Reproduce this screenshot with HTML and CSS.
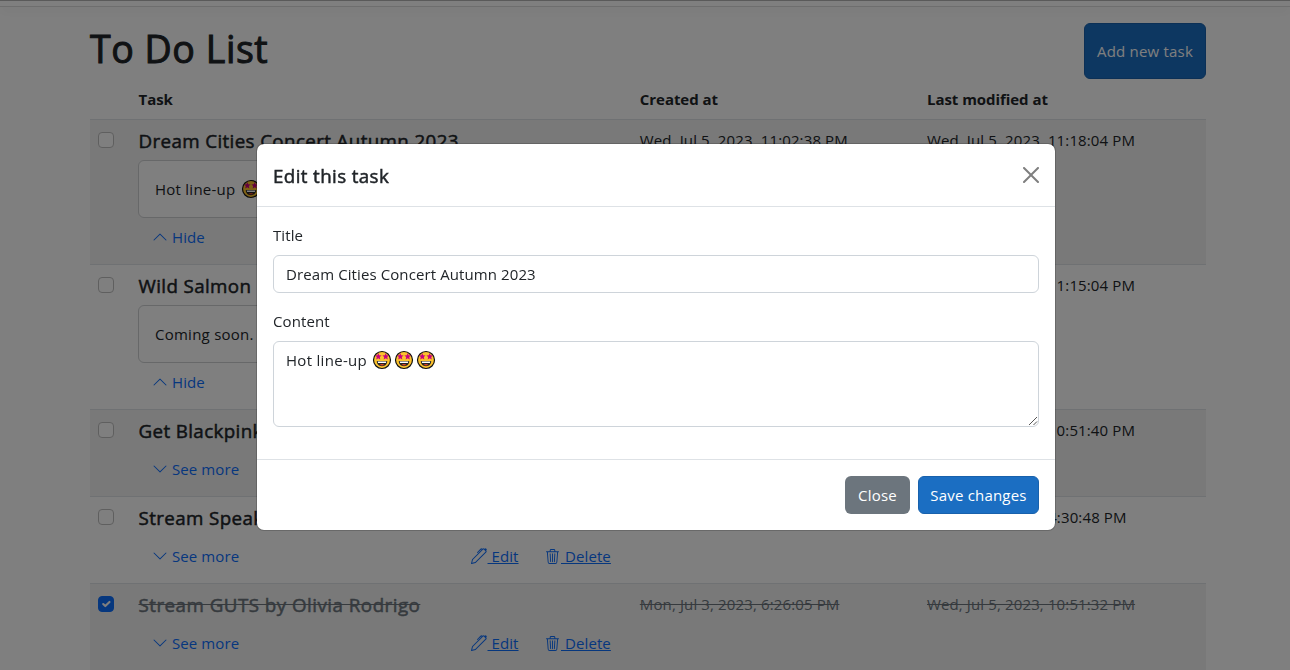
FILE: index.html
```html
<!DOCTYPE html>
<html lang="en">
<head>
<meta charset="utf-8">
<title>To Do List</title>
<link rel="stylesheet" href="styles.css">
</head>
<body>
<svg class="sprite" aria-hidden="true">
  <symbol id="up" viewBox="0 0 16 16"><path fill-rule="evenodd" d="M7.646 4.646a.5.5 0 0 1 .708 0l6 6a.5.5 0 0 1-.708.708L8 5.707l-5.646 5.647a.5.5 0 0 1-.708-.708z"/></symbol>
  <symbol id="down" viewBox="0 0 16 16"><path fill-rule="evenodd" d="M1.646 4.646a.5.5 0 0 1 .708 0L8 10.293l5.646-5.647a.5.5 0 0 1 .708.708l-6 6a.5.5 0 0 1-.708 0l-6-6a.5.5 0 0 1 0-.708z"/></symbol>
  <symbol id="pen" viewBox="0 0 16 16"><path d="m13.498.795.149-.149a1.207 1.207 0 1 1 1.707 1.708l-.149.148a1.5 1.5 0 0 1-.059 2.059L4.854 14.854a.5.5 0 0 1-.233.131l-4 1a.5.5 0 0 1-.606-.606l1-4a.5.5 0 0 1 .131-.232l9.642-9.642a.5.5 0 0 0-.642.056L6.854 4.854a.5.5 0 1 1-.708-.708L9.44.854A1.5 1.5 0 0 1 11.5.796a1.5 1.5 0 0 1 1.998-.001zm-.644.766a.5.5 0 0 0-.707 0L1.95 11.756l-.764 3.057 3.057-.764L14.44 3.854a.5.5 0 0 0 0-.708l-1.585-1.585z"/></symbol>
  <symbol id="trash" viewBox="0 0 16 16"><path d="M6.5 1h3a.5.5 0 0 1 .5.5v1H6v-1a.5.5 0 0 1 .5-.5ZM11 2.5v-1A1.5 1.5 0 0 0 9.5 0h-3A1.5 1.5 0 0 0 5 1.5v1H2.506a.58.58 0 0 0-.01 0H1.5a.5.5 0 0 0 0 1h.538l.853 10.66A2 2 0 0 0 4.885 16h6.23a2 2 0 0 0 1.994-1.84l.853-10.66h.538a.5.5 0 0 0 0-1h-.995a.59.59 0 0 0-.01 0H11Zm1.958 1-.846 10.58a1 1 0 0 1-.997.92h-6.23a1 1 0 0 1-.997-.92L3.042 3.5h9.916Zm-7.487 1a.5.5 0 0 1 .528.47l.5 8.5a.5.5 0 0 1-.998.06L5 5.03a.5.5 0 0 1 .47-.53Zm5.058 0a.5.5 0 0 1 .47.53l-.5 8.5a.5.5 0 1 1-.998-.06l.5-8.5a.5.5 0 0 1 .528-.47ZM8 4.5a.5.5 0 0 1 .5.5v8.5a.5.5 0 0 1-1 0V5a.5.5 0 0 1 .5-.5Z"/></symbol>
  <symbol id="starry" viewBox="0 0 20 20">
    <circle cx="10" cy="10" r="8.5" fill="#fcc22d" stroke="#111" stroke-width="1.2"/>
    <path fill="#c9007f" d="m6.300 3.100.9 2.200 2.400.2-1.800 1.600.5 2.400-2-1.300L4.200 9.500l.6-2.400L3 5.500l2.400-.2zM13.700 3.100l.9 2.200 2.400.2-1.800 1.600.6 2.400-2.100-1.300-2 1.300.5-2.400-1.800-1.600 2.400-.2z"/>
    <path fill="#222" d="M4.800 11h10.400c0 3.200-2.200 5.200-5.200 5.200S4.800 14.200 4.800 11z"/>
    <path fill="#fff" d="M5.700 11.600h8.600l-.4 1.300H6.100z"/>
    <path fill="#e8492d" d="M7.500 14.800q2.500-1.400 5 0-2.500 1.500-5 0z"/>
  </symbol>
</svg>

<div class="navbar"></div>
<main class="container">
  <header class="page-head">
    <h1>To Do List</h1>
    <button class="btn primary add">Add new task</button>
  </header>

  <section class="table">
    <div class="row head"><div></div><div>Task</div><div>Created at</div><div>Last modified at</div></div>

    <div class="row striped">
      <div class="cell"><span class="check"></span></div>
      <div class="cell">
        <h5>Dream Cities Concert Autumn 2023</h5>
        <div class="card">Hot line-up <svg class="emoji"><use href="#starry"/></svg><svg class="emoji"><use href="#starry"/></svg><svg class="emoji"><use href="#starry"/></svg></div>
        <div class="actions"><a class="toggle"><svg class="icon"><use href="#up"/></svg>Hide</a></div>
      </div>
      <div class="cell date">Wed, Jul 5, 2023, 11:02:38 PM</div>
      <div class="cell date">Wed, Jul 5, 2023, 11:18:04 PM</div>
    </div>

    <div class="row">
      <div class="cell"><span class="check"></span></div>
      <div class="cell">
        <h5>Wild Salmon</h5>
        <div class="card">Coming soon.</div>
        <div class="actions"><a class="toggle"><svg class="icon"><use href="#up"/></svg>Hide</a></div>
      </div>
      <div class="cell date">Wed, Jul 5, 2023, 11:15:04 PM</div>
      <div class="cell date">Wed, Jul 5, 2023, 11:15:04 PM</div>
    </div>

    <div class="row striped">
      <div class="cell"><span class="check"></span></div>
      <div class="cell">
        <h5>Get Blackpink</h5>
        <div class="actions"><a class="toggle"><svg class="icon"><use href="#down"/></svg>See more</a></div>
      </div>
      <div class="cell date">Wed, Jul 5, 2023, 10:51:40 PM</div>
      <div class="cell date">Wed, Jul 5, 2023, 10:51:40 PM</div>
    </div>

    <div class="row">
      <div class="cell"><span class="check"></span></div>
      <div class="cell">
        <h5>Stream Speak</h5>
        <div class="actions"><a class="toggle"><svg class="icon"><use href="#down"/></svg>See more</a>
          <a class="link edit"><svg class="icon"><use href="#pen"/></svg><u>&nbsp;Edit</u></a>
          <a class="link delete"><svg class="icon"><use href="#trash"/></svg><u>&nbsp;Delete</u></a></div>
      </div>
      <div class="cell date">Mon, Jul 3, 2023, 4:30:48 PM</div>
      <div class="cell date">Mon, Jul 3, 2023, 4:30:48 PM</div>
    </div>

    <div class="row striped done">
      <div class="cell"><span class="check checked"><svg viewBox="0 0 20 20"><path fill="none" stroke="#fff" stroke-linecap="round" stroke-linejoin="round" stroke-width="3" d="m6 10 3 3 6-6"/></svg></span></div>
      <div class="cell">
        <h5>Stream GUTS by Olivia Rodrigo</h5>
        <div class="actions"><a class="toggle"><svg class="icon"><use href="#down"/></svg>See more</a>
          <a class="link edit"><svg class="icon"><use href="#pen"/></svg><u>&nbsp;Edit</u></a>
          <a class="link delete"><svg class="icon"><use href="#trash"/></svg><u>&nbsp;Delete</u></a></div>
      </div>
      <div class="cell date">Mon, Jul 3, 2023, 6:26:05 PM</div>
      <div class="cell date">Wed, Jul 5, 2023, 10:51:32 PM</div>
    </div>
  </section>
</main>

<div class="backdrop">
  <div class="modal" role="dialog">
    <div class="modal-head">
      <h5>Edit this task</h5>
      <svg class="close" viewBox="0 0 16 16"><path d="M.293.293a1 1 0 0 1 1.414 0L8 6.586 14.293.293a1 1 0 1 1 1.414 1.414L9.414 8l6.293 6.293a1 1 0 0 1-1.414 1.414L8 9.414l-6.293 6.293a1 1 0 0 1-1.414-1.414L6.586 8 .293 1.707a1 1 0 0 1 0-1.414z"/></svg>
    </div>
    <div class="modal-body">
      <label>Title</label>
      <div class="field">Dream Cities Concert Autumn 2023</div>
      <label>Content</label>
      <div class="field area"><span>Hot line-up <svg class="emoji"><use href="#starry"/></svg><svg class="emoji"><use href="#starry"/></svg><svg class="emoji"><use href="#starry"/></svg></span>
        <svg class="grip" viewBox="0 0 10 10"><path d="M1 9 9 1M5.500 9 9 5.500" fill="none" stroke="#555"/></svg></div>
    </div>
    <div class="modal-foot">
      <button class="btn secondary">Close</button>
      <button class="btn primary save">Save changes</button>
    </div>
  </div>
</div>
</body>
</html>
```
FILE: styles.css
```css
* { box-sizing: border-box; }
body { margin: 0; height: 670px; overflow: hidden; background: #fff; color: #212529; font: 400 15px/24px "Open Sans", "Noto Sans", sans-serif; letter-spacing: .1px; }
h1, h5 { margin: 0; font-weight: 400; -webkit-text-stroke: .5px currentColor; letter-spacing: .38px; }
.sprite { position: absolute; width: 0; height: 0; }

.navbar { height: 7px; border-top: 1px solid #b4b4b4; border-bottom: 1px solid #dcdcdc; box-shadow: 0 4px 12px rgba(0, 0, 0, .05); }
.container { width: 1116px; margin-left: 90px; }
.page-head { display: flex; justify-content: space-between; height: 72px; padding-top: 16px; }
h1 { font-size: 37.5px; line-height: 52px; letter-spacing: .55px; -webkit-text-stroke-width: 1px; }

.btn { height: 38px; padding: 0; border: 0; border-radius: 6px; font: inherit; letter-spacing: .2px; color: #fff; }
.primary { background: #1b6ec2; border: 1px solid #1861ac; }
.secondary { width: 65px; background: #6c757d; }
.save { width: 121px; }
.add { width: 122px; height: 56px; }

.row { display: grid; grid-template-columns: 40.5px 501.3px 287.2px 287px; border-bottom: 1px solid #dee2e6; }
.head { height: 41px; padding-top: 8px; font-weight: 700; letter-spacing: -.05px; }
.head div { padding-left: 8px; }
.striped { background: #f2f2f2; }
.cell { padding: 8px; }
.row h5 { margin-bottom: 8px; font-size: 18.75px; line-height: 25px; height: 24px; white-space: nowrap; }
.row.done h5 { letter-spacing: .48px; }
.date { white-space: nowrap; letter-spacing: .13px; }
.card { height: 58px; margin-left: -.5px; padding: 16px; border: 1px solid #ced0d2; border-radius: 6px; background: #fff; letter-spacing: .25px; }
.check { display: block; width: 16px; height: 16px; margin-top: 4px; border: 1px solid #bfbfbf; border-radius: 4px; background: #fff; }
.check.checked { background: #0d6efd; border-color: #0d6efd; }
.check svg { display: block; width: 14px; height: 14px; }
.done h5, .done .date { color: #6c757d; text-decoration: line-through; }

.actions { display: flex; align-items: center; height: 38px; color: #0d6efd; }
.toggle { display: flex; align-items: center; width: 332px; padding-left: 13px; }
.icon { width: 16px; height: 16px; fill: currentColor; }
.toggle .icon { margin-right: 4.5px; }
.link { display: flex; align-items: center; }
.link u { margin-left: 1px; }
.edit { width: 74px; }
.delete .icon { width: 15px; height: 15px; margin-right: .5px; }
.emoji { width: 20px; height: 20px; margin: 0 1px; vertical-align: -4px; }

.backdrop { position: fixed; inset: 0; background: rgba(0, 0, 0, .5); padding-top: 143px; }
.modal { width: 800px; margin-left: 256px; border: 1px solid rgba(0, 0, 0, .175); border-radius: 8px; background: #fff; background-clip: padding-box; }
.modal-head { display: flex; align-items: center; justify-content: space-between; height: 63px; padding: 0 16px; border-bottom: 1px solid #dee2e6; }
.modal-head h5 { font-size: 18.75px; line-height: 30px; padding-top: 1px; }
.close { width: 16px; height: 16px; fill: #7f7f7f; }
.modal-body { padding: 16px; }
label { display: block; margin-bottom: 8px; }
.field { height: 38px; margin-bottom: 16px; padding: 6px 12px; border: 1px solid #ced4da; border-radius: 6px; }
.area { display: flex; justify-content: space-between; height: 86px; padding-right: 0; padding-bottom: 0; letter-spacing: .3px; }
.grip { width: 10px; height: 10px; align-self: flex-end; }
.modal-foot { display: flex; justify-content: flex-end; gap: 8px; height: 71px; padding: 16px; border-top: 1px solid #dee2e6; }
```
